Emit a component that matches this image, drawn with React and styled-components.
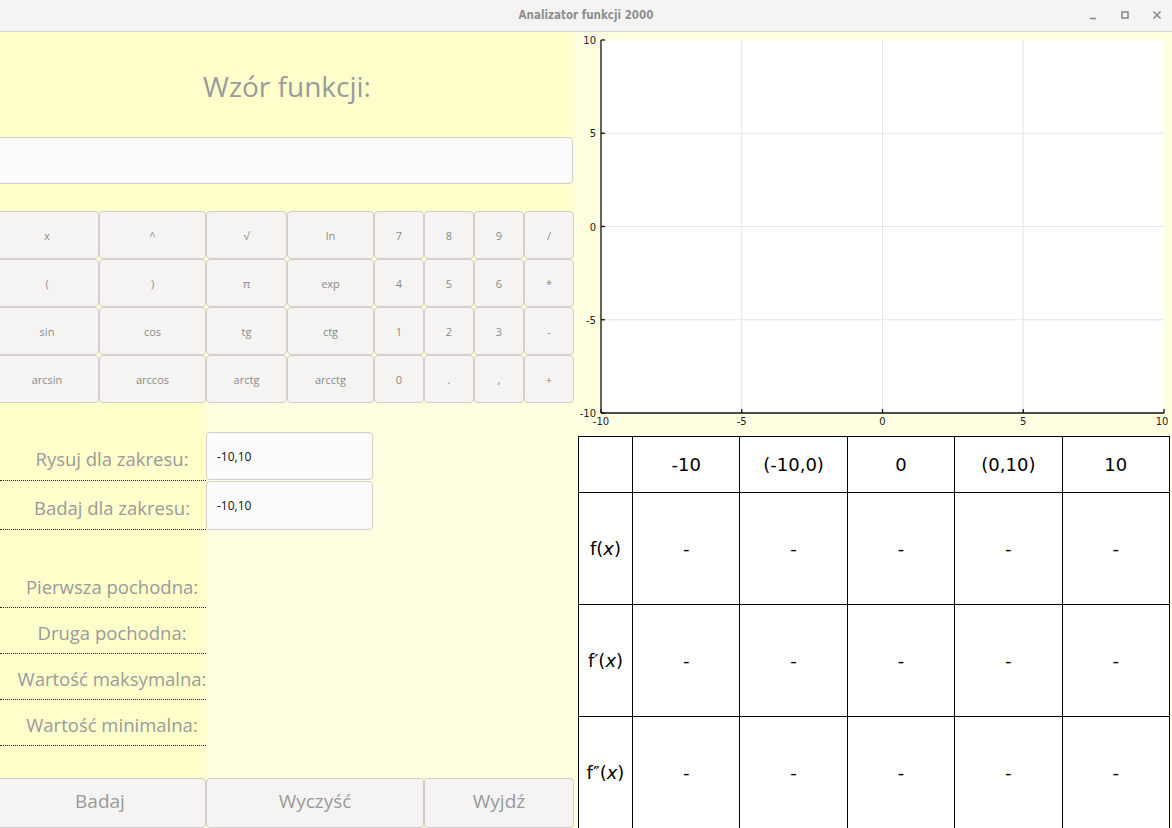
import React from "react";
import styled, { createGlobalStyle } from "styled-components";

const GlobalStyle = createGlobalStyle`
  html, body {
    margin: 0;
    padding: 0;
    overflow: hidden;
    background: #f5f4f2;
  }
  * {
    box-sizing: border-box;
  }
`;

const Window = styled("div")`
  width: 1172px;
  height: 828px;
  display: flex;
  flex-direction: column;
  overflow: hidden;
  font-family: "Open Sans", "DejaVu Sans", sans-serif;
`;

const TitleBar = styled("div")`
  height: 32px;
  flex: none;
  display: grid;
  grid-template-columns: 1fr auto 1fr;
  align-items: center;
  background: #f5f4f2;
  border-bottom: 1px solid #d9d7d3;
`;

const Title = styled("div")`
  grid-column: 2;
  font-family: "Liberation Sans Narrow", "DejaVu Sans Condensed", "Liberation Sans", sans-serif;
  font-weight: bold;
  font-size: 11.5px;
  color: #8e8e8e;
  padding-bottom: 2px;
`;

const Controls = styled("div")`
  grid-column: 3;
  justify-self: end;
  display: flex;
  align-items: center;
  gap: 22px;
  padding-right: 10px;
  padding-bottom: 2px;
  color: #8a8a8a;
`;

const Body = styled("div")`
  flex: 1;
  display: flex;
  min-height: 0;
`;

const LeftPanel = styled("div")`
  width: 574px;
  flex: none;
  display: flex;
  flex-direction: column;
  background: #ffffcc;
  overflow: hidden;
`;

const Heading = styled("div")`
  height: 105px;
  display: flex;
  align-items: center;
  justify-content: center;
  padding-top: 2px;
  font-size: 28px;
  color: #9a9a9a;
`;

const FormulaInput = styled("input")`
  height: 47px;
  margin-left: -6px;
  width: 579px;
  border: 1px solid #cfcfcf;
  border-radius: 4px;
  background: #fcfcfc;
  outline: none;
`;

const Keypad = styled("div")`
  margin-top: 27px;
  margin-left: -5px;
  display: grid;
  grid-template-columns: 104px 107px 81px 87px 50px 50px 50px 50px;
  grid-auto-rows: 48px;
`;

const KeyButton = styled("button")`
  border: 1px solid #d3cfcb;
  border-radius: 4px;
  background: #f5f4f2;
  color: #8b8b8b;
  font-family: "Open Sans", sans-serif;
  font-size: 11px;
  padding: 0;
`;

const Lower = styled("div")`
  flex: 1;
  display: flex;
`;

const LabelColumn = styled("div")`
  width: 206px;
  flex: none;
  background: #ffffcc;
  padding-top: 29px;
  display: flex;
  flex-direction: column;
`;

const FieldColumn = styled("div")`
  flex: 1;
  background: #fffee0;
  padding-top: 29px;
  display: flex;
  flex-direction: column;
`;

const Label = styled("div")`
  height: ${(p) => p.h}px;
  margin-top: ${(p) => p.gap || 0}px;
  display: flex;
  align-items: center;
  justify-content: center;
  padding-left: 18px;
  padding-top: ${(p) => p.offset || 0}px;
  border-bottom: 1px dotted #222;
  font-size: 18.5px;
  color: #9a9a9a;
  white-space: nowrap;
`;

const RangeInput = styled("input")`
  width: 167px;
  height: ${(p) => p.h}px;
  margin-top: ${(p) => p.gap || 0}px;
  border: 1px solid #cfcfcf;
  border-radius: 4px;
  background: #fcfcfc;
  padding-left: 10px;
  font-family: "Open Sans", sans-serif;
  font-size: 12px;
  color: #111;
  outline: none;
`;

const BottomBar = styled("div")`
  height: 50px;
  flex: none;
  margin-left: -6px;
  display: grid;
  grid-template-columns: 212px 218px 150px;
`;

const ActionButton = styled("button")`
  border: 1px solid #cfcccb;
  border-radius: 4px;
  background: #f5f4f2;
  color: #9a9a9a;
  font-family: "Open Sans", sans-serif;
  font-size: 19px;
  padding: 0 0 4px;
`;

const RightPanel = styled("div")`
  flex: 1;
  background: #fffee0;
  display: flex;
  flex-direction: column;
  overflow: hidden;
`;

const Chart = styled("svg")`
  display: block;
  flex: none;
`;

const Table = styled("table")`
  margin-left: 4px;
  width: 592px;
  flex: none;
  border-collapse: collapse;
  table-layout: fixed;
  background: #fff;
  font-family: "DejaVu Sans", sans-serif;
  font-size: 18px;
  color: #000;
`;

const Cell = styled("td")`
  border: 1.5px solid #000;
  text-align: center;
  vertical-align: middle;
  height: ${(p) => p.h}px;
  padding: 0;
`;

const Em = styled("i")`
  font-style: italic;
`;

const keys = [
  "x", "^", "√", "ln", "7", "8", "9", "/",
  "(", ")", "π", "exp", "4", "5", "6", "*",
  "sin", "cos", "tg", "ctg", "1", "2", "3", "-",
  "arcsin", "arccos", "arctg", "arcctg", "0", ".", ",", "+",
];

const columns = ["-10", "(-10,0)", "0", "(0,10)", "10"];

const rows = [
  <>f(<Em>x</Em>)</>,
  <>f′(<Em>x</Em>)</>,
  <>f″(<Em>x</Em>)</>,
];

const PX = 27;
const PY = 8;
const PW = 563;
const PH = 373;
const ticks = [-10, -5, 0, 5, 10];

const Plot = () => (
  <Chart width="598" height="404">
    <rect x={PX} y={PY} width={PW} height={PH} fill="#fff" />
    {[1, 2, 3].map((k) => (
      <g key={k} stroke="#e6e6e6" strokeWidth="1">
        <line x1={PX + (PW * k) / 4} y1={PY} x2={PX + (PW * k) / 4} y2={PY + PH} />
        <line x1={PX} y1={PY + (PH * k) / 4} x2={PX + PW} y2={PY + (PH * k) / 4} />
      </g>
    ))}
    <g stroke="#111" strokeWidth="1.3" fill="none">
      <line x1={PX} y1={PY} x2={PX} y2={PY + PH} />
      <line x1={PX} y1={PY + PH} x2={PX + PW} y2={PY + PH} />
      {ticks.map((t, i) => (
        <g key={t}>
          <line x1={PX} y1={PY + (PH * i) / 4} x2={PX + 4} y2={PY + (PH * i) / 4} />
          <line x1={PX + (PW * i) / 4} y1={PY + PH} x2={PX + (PW * i) / 4} y2={PY + PH - 4} />
        </g>
      ))}
    </g>
    <g fontFamily="DejaVu Sans, sans-serif" fontSize="10" fill="#222">
      {ticks.map((t, i) => (
        <text key={"y" + t} x={PX - 5} y={PY + (PH * (4 - i)) / 4 + 4} textAnchor="end">
          {t}
        </text>
      ))}
      {ticks.map((t, i) => (
        <text key={"x" + t} x={PX + (PW * i) / 4 - (i === 4 ? 2 : 0)} y={PY + PH + 12} textAnchor="middle">
          {t}
        </text>
      ))}
    </g>
  </Chart>
);

const App = () => {
  return (
    <Window>
      <GlobalStyle />
      <TitleBar>
        <Title>Analizator funkcji 2000</Title>
        <Controls>
          <svg width="10" height="10" viewBox="0 0 10 10">
            <line x1="2" y1="8.5" x2="8" y2="8.5" stroke="currentColor" strokeWidth="1.6" />
          </svg>
          <svg width="10" height="10" viewBox="0 0 10 10">
            <rect x="2" y="2" width="6" height="6" fill="none" stroke="currentColor" strokeWidth="1.6" />
          </svg>
          <svg width="10" height="10" viewBox="0 0 10 10">
            <path d="M1.5 1.5 L8.5 8.5 M8.5 1.5 L1.5 8.5" stroke="currentColor" strokeWidth="1.6" />
          </svg>
        </Controls>
      </TitleBar>
      <Body>
        <LeftPanel>
          <Heading>Wzór funkcji:</Heading>
          <FormulaInput />
          <Keypad>
            {keys.map((k) => (
              <KeyButton key={k}>{k}</KeyButton>
            ))}
          </Keypad>
          <Lower>
            <LabelColumn>
              <Label h={49} offset={4}>Rysuj dla zakresu:</Label>
              <Label h={49} offset={4}>Badaj dla zakresu:</Label>
              <Label h={46} gap={32} offset={4}>Pierwsza pochodna:</Label>
              <Label h={46} offset={4}>Druga pochodna:</Label>
              <Label h={46} offset={4}>Wartość maksymalna:</Label>
              <Label h={46} offset={4}>Wartość minimalna:</Label>
            </LabelColumn>
            <FieldColumn>
              <RangeInput h={48} defaultValue="-10,10" />
              <RangeInput h={49} gap={1} defaultValue="-10,10" />
            </FieldColumn>
          </Lower>
          <BottomBar>
            <ActionButton>Badaj</ActionButton>
            <ActionButton>Wyczyść</ActionButton>
            <ActionButton>Wyjdź</ActionButton>
          </BottomBar>
        </LeftPanel>
        <RightPanel>
          <Plot />
          <Table>
            <colgroup>
              <col style={{ width: 54 }} />
              {columns.map((c) => (
                <col key={c} />
              ))}
            </colgroup>
            <tbody>
              <tr>
                <Cell h={56} />
                {columns.map((c) => (
                  <Cell key={c} h={56}>{c}</Cell>
                ))}
              </tr>
              {rows.map((r, i) => (
                <tr key={i}>
                  <Cell h={112}>{r}</Cell>
                  {columns.map((c) => (
                    <Cell key={c} h={112}>-</Cell>
                  ))}
                </tr>
              ))}
            </tbody>
          </Table>
        </RightPanel>
      </Body>
    </Window>
  );
};

export default App;
